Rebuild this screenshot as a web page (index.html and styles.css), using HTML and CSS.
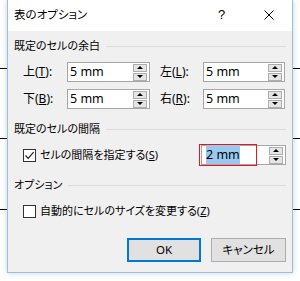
FILE: index.html
```html
<!DOCTYPE html>
<html lang="ja">
<head>
    <meta charset="UTF-8">
    <title>表のオプション</title>
    <link rel="stylesheet" href="styles.css">
</head>
<body>
    <div class="dialog">
        <div class="titlebar">
            <span class="title">表のオプション</span>
            <span class="help">?</span>
            <span class="close">
                <svg width="10" height="10" viewBox="0 0 10 10"><path d="M0.5 0.5L9.5 9.5M9.5 0.5L0.5 9.5" stroke="#000" stroke-width="1" fill="none"/></svg>
            </span>
        </div>
        <div class="content">
            <div class="group-head"><span>既定のセルの余白</span></div>
            <div class="margin-grid">
                <label>上(<u>T</u>):</label>
                <div class="spin"><span class="val">5 mm</span><span class="arrows"><i class="up"></i><i class="down"></i></span></div>
                <label class="second">左(<u>L</u>):</label>
                <div class="spin"><span class="val">5 mm</span><span class="arrows"><i class="up"></i><i class="down"></i></span></div>
                <label>下(<u>B</u>):</label>
                <div class="spin"><span class="val">5 mm</span><span class="arrows"><i class="up"></i><i class="down"></i></span></div>
                <label class="second">右(<u>R</u>):</label>
                <div class="spin"><span class="val">5 mm</span><span class="arrows"><i class="up"></i><i class="down"></i></span></div>
            </div>

            <div class="group-head spacing-head"><span>既定のセルの間隔</span></div>
            <div class="check-row">
                <span class="checkbox">
                    <svg width="11" height="11" viewBox="0 0 11 11"><path d="M1.5 5.5L4.2 8.3L9.6 2.2" stroke="#222" stroke-width="1.2" fill="none"/></svg>
                </span>
                <span class="check-label">セルの間隔を指定する(<u>S</u>)</span>
                <div class="spin spacing">
                    <span class="val"><span class="selected">2 mm</span></span>
                    <span class="arrows"><i class="up"></i><i class="down"></i></span>
                    <span class="mark"></span>
                </div>
            </div>

            <div class="group-head option-head"><span>オプション</span></div>
            <div class="check-row auto-row">
                <span class="checkbox"></span>
                <span class="check-label">自動的にセルのサイズを変更する(<u>Z</u>)</span>
            </div>

            <div class="buttons">
                <button class="btn default">OK</button>
                <button class="btn">キャンセル</button>
            </div>
        </div>
    </div>
</body>
</html>
```

FILE: styles.css
```css
html, body {
    margin: 0;
    padding: 0;
}

body {
    width: 300px;
    height: 281px;
    overflow: hidden;
    background-color: #ffffff;
    /* table lines of the document behind the dialog */
    background-image:
        linear-gradient(#000, #000),
        linear-gradient(#000, #000),
        linear-gradient(#000, #000);
    background-size: 300px 1px;
    background-position: 0 68px, 0 138px, 0 209px;
    background-repeat: no-repeat;
    font-family: "Noto Sans", "Noto Sans CJK JP", sans-serif;
    font-feature-settings: "palt";
    font-size: 11px;
    color: #000;
}

.dialog {
    box-sizing: border-box;
    margin-left: 7px;
    width: 286px;
    height: 273px;
    border: 1px solid #8ec2ee;
    border-top: none;
    background-color: #f0f0f0;
    box-shadow: 0 0 6px rgba(0, 0, 0, 0.18);
    display: flex;
    flex-direction: column;
}

.titlebar {
    height: 31px;
    background-color: #ffffff;
    display: flex;
    align-items: center;
    padding-left: 6px;
}

.title {
    flex: 1;
    font-size: 11.5px;
    line-height: 16px;
    margin-top: -1px;
}

.help {
    width: 14px;
    font-family: "Liberation Sans", sans-serif;
    font-size: 13px;
    line-height: 16px;
    margin-right: 32px;
    margin-top: -2px;
}

.close {
    display: flex;
    margin-right: 18px;
    margin-top: -1px;
}

.content {
    padding: 0 6px 0 6px;
    display: flex;
    flex-direction: column;
}

.group-head {
    display: flex;
    align-items: center;
    height: 16px;
    margin-top: 7px;
    line-height: 16px;
}

.group-head::after {
    content: "";
    flex: 1;
    height: 1px;
    background-color: #dcdcdc;
    margin-left: 6px;
}

.spacing-head {
    margin-top: 12px;
}

.option-head {
    margin-top: 12px;
}

.margin-grid {
    display: grid;
    grid-template-columns: 44px 83px 53px 82px;
    grid-auto-rows: 20px;
    row-gap: 7px;
    margin-top: 8px;
    margin-left: 9px;
}

.margin-grid label {
    display: flex;
    align-items: center;
    line-height: 16px;
    font-size: 12px;
}

.margin-grid label.second {
    padding-left: 10px;
}

u {
    text-decoration: underline;
    text-underline-offset: 1px;
}

.spin {
    position: relative;
    box-sizing: border-box;
    height: 20px;
    border: 1px solid #a6a6a6;
    background-color: #ffffff;
    display: flex;
    align-items: center;
}

.val {
    flex: 1;
    padding-left: 2px;
    line-height: 16px;
    font-size: 12.5px;
}

.arrows {
    display: flex;
    flex-direction: column;
    gap: 1px;
    margin-right: 2px;
}

.arrows i {
    box-sizing: border-box;
    width: 14px;
    height: 8px;
    border: 1px solid #adadad;
    background-color: #e5e5e5;
    display: flex;
    align-items: center;
    justify-content: center;
}

.arrows i::before {
    content: "";
    width: 0;
    height: 0;
    border-left: 3px solid transparent;
    border-right: 3px solid transparent;
}

.arrows .up::before {
    border-bottom: 3px solid #000;
}

.arrows .down::before {
    border-top: 3px solid #000;
}

.check-row {
    display: flex;
    align-items: center;
    height: 20px;
    margin-top: 8px;
    margin-left: 9px;
}

.checkbox {
    box-sizing: border-box;
    width: 13px;
    height: 13px;
    border: 1px solid #333;
    background-color: #ffffff;
    display: flex;
    align-items: center;
    justify-content: center;
}

.check-label {
    margin-left: 4px;
    line-height: 16px;
}

.spin.spacing {
    margin-left: auto;
    width: 85px;
}

.spin.spacing .val {
    padding-left: 4px;
}

.selected {
    background-color: #99c9ef;
    padding: 1px 0;
}

.mark {
    position: absolute;
    left: -3px;
    top: -2px;
    width: 56px;
    height: 20px;
    border: 1px solid #e8141e;
}

.buttons {
    display: flex;
    justify-content: flex-end;
    gap: 10px;
    margin-top: 17px;
}

.btn {
    box-sizing: border-box;
    height: 24px;
    width: 75px;
    border: 1px solid #adadad;
    background-color: #e1e1e1;
    font-family: "Noto Sans", "Noto Sans CJK JP", sans-serif;
    font-feature-settings: "palt";
    font-size: 11.5px;
    color: #000;
    padding: 0;
    line-height: 16px;
}

.btn.default {
    width: 74px;
    border: 2px solid #0078d7;
}
```
